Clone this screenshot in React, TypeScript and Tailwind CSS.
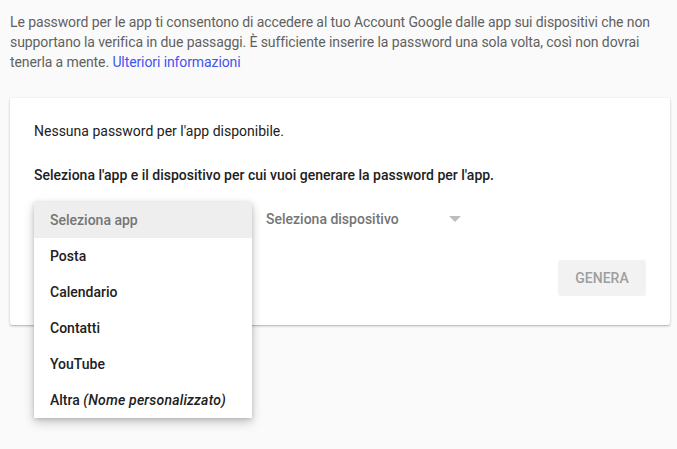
import React from 'react';

const apps = ['Posta', 'Calendario', 'Contatti', 'YouTube'];

export default function App() {
  return (
    <div className="min-h-[449px] w-[677px] bg-[#fafafa] px-[10px] pt-[12px] font-['Roboto',sans-serif] text-[14px]">
      <p className="whitespace-nowrap leading-[20px] tracking-[-0.1px] text-[#616161]">
        Le password per le app ti consentono di accedere al tuo Account Google dalle app sui dispositivi che non
        <br />
        supportano la verifica in due passaggi. È sufficiente inserire la password una sola volta, così non dovrai
        <br />
        tenerla a mente. <a className="text-[#4353f0]">Ulteriori informazioni</a>
      </p>

      <div className="relative mt-[26px] w-[660px] rounded-[2px] bg-white px-[24px] pb-[29px] pt-[23px] shadow-[0_1px_3px_rgba(0,0,0,0.2),0_1px_1px_rgba(0,0,0,0.12)]">
        <p className="leading-[20px] text-[#212121]">Nessuna password per l'app disponibile.</p>
        <p className="mt-[24px] font-medium leading-[20px] text-[#212121]">
          Seleziona l'app e il dispositivo per cui vuoi generare la password per l'app.
        </p>

        <div className="mt-[16px] flex h-[36px] items-center">
          <div className="flex w-[216px] items-center justify-between px-[16px] font-medium text-[#757575]">
            <span>Seleziona app</span>
          </div>
          <div className="flex w-[221px] items-center justify-between pl-[16px] pr-[10px] font-medium text-[#757575]">
            <span>Seleziona dispositivo</span>
            <svg width="12" height="6" viewBox="0 0 12 6">
              <path d="M0 0 L12 0 L6 6 Z" fill="#bdbdbd" />
            </svg>
          </div>
        </div>

        <div className="mt-[23px] flex justify-end">
          <button className="h-[36px] w-[88px] rounded-[3px] bg-[#f2f2f2] text-[14px] font-medium text-[#9e9e9e]">
            GENERA
          </button>
        </div>

        <div className="absolute left-[24px] top-[104px] w-[218px] bg-white font-medium text-[#212121] shadow-[0_4px_10px_rgba(0,0,0,0.22),0_1px_4px_rgba(0,0,0,0.14)]">
          <div className="flex h-[36px] items-center bg-[#eeeeee] px-[16px] text-[#757575]">Seleziona app</div>
          {apps.map(a => (
            <div key={a} className="flex h-[36px] items-center px-[16px]">{a}</div>
          ))}
          <div className="flex h-[36px] items-center px-[16px]">
            Altra&nbsp;<i className="tracking-[0.2px]">(Nome personalizzato)</i>
          </div>
        </div>
      </div>
    </div>
  );
}
